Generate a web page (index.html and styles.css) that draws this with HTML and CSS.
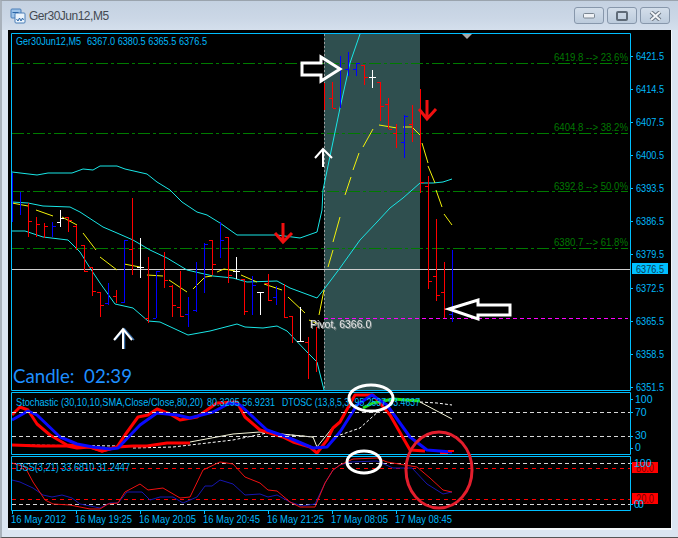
FILE: index.html
```html
<!DOCTYPE html>
<html lang="en">
<head>
  <meta charset="UTF-8">
  <title>Ger30Jun12,M5</title>
  <link rel="stylesheet" href="styles.css">
</head>
<body>

  <div class="window">
    <div class="titlebar">
      <svg class="app-icon" width="16" height="16" viewBox="0 0 16 16">
        <rect class="icon-back" x="1" y="1" width="10" height="9" rx="1"/>
        <rect class="icon-front" x="5" y="5" width="10" height="10" rx="1"/>
        <path class="icon-wave" d="M6.5 11l1.5 2 1.5-3 1.5 3 1.5-3 1 2"/>
        <path class="icon-wave" d="M2.5 4.5h6"/>
      </svg>
      <span class="title">Ger30Jun12,M5</span>
      <div class="win-buttons">
        <div class="win-btn">
          <svg width="12" height="6" viewBox="0 0 12 6"><rect class="glyph" x="0.5" y="0.5" width="11" height="4.5" rx="1"/></svg>
        </div>
        <div class="win-btn">
          <svg width="12" height="10" viewBox="0 0 12 10"><rect class="glyph-hollow" x="1" y="1" width="10" height="8" rx="1"/></svg>
        </div>
        <div class="win-btn">
          <svg width="13" height="10" viewBox="0 0 13 10"><path class="glyph-x" d="M2 1l9 8M11 1l-9 8"/><path class="glyph-x-in" d="M2 1l9 8M11 1l-9 8"/></svg>
        </div>
      </div>
    </div>

    <div class="client">
      <svg class="chart" width="663" height="498" viewBox="8 30 663 498">
        <!-- shaded session -->
        <rect class="session" x="324" y="34" width="96" height="356"/>
        <path class="vline" d="M324.5 34V390"/>
        <path class="chart-mark" d="M462 34h10l-5 5z"/>

        <!-- fibo levels -->
        <path class="fibo-line" d="M12 63.5H628M12 133.5H628M12 191.5H628M12 248.5H628"/>
        <path class="last-line" d="M12 269.5H630"/>
        <path class="pivot-line" d="M324 318.5H628"/>
        <text class="fibo" x="554" y="61" textLength="74" lengthAdjust="spacingAndGlyphs">6419.8 --&gt; 23.6%</text>
        <text class="fibo" x="554" y="131" textLength="74" lengthAdjust="spacingAndGlyphs">6404.8 --&gt; 38.2%</text>
        <text class="fibo" x="554" y="190" textLength="74" lengthAdjust="spacingAndGlyphs">6392.8 --&gt; 50.0%</text>
        <text class="fibo" x="554" y="246" textLength="74" lengthAdjust="spacingAndGlyphs">6380.7 --&gt; 61.8%</text>

        <!-- bollinger bands -->
        <polyline class="band" points="12,172 37,175 48,173 72,173 83,169 93,170 100,166 117,166 125,169 147,174 157,182 170,190 182,202 197,212 207,215 220,223 237,235 277,235 300,238 317,232 322,210 323,190 340,108 350,63 360,34"/>
        <polyline class="band" points="12,202 28,203 43,206 70,207 80,212 103,227 117,233 133,240 150,250 167,258 187,270 213,276 233,278 247,282 277,281 290,288 317,298 325,288 340,268 360,240 377,222 390,208 403,198 420,183 433,183 443,182 452,179"/>
        <polyline class="band" points="12,231 25,231 43,237 68,240 80,252 90,268 100,283 115,304 133,308 148,321 160,322 188,335 210,331 237,324 245,327 263,328 277,326 287,331 307,352 317,362 324,390"/>

        <!-- moving average -->
        <path class="ma" d="M12 203L28 206M36 210L53 216M62 217L77 225M83 233L96 250M100 257L117 270M124 264L140 267M147 275L163 276M169 280L187 292M193 289L205 277L212 276M217 272L224 269L235 271M241 275L257 282M264 284L282 290M288 297L305 313M309 320L318 324M319 315L324 290M328 267L333 250M333 242L340 217M345 195L351 177M353 170L359 153M363 147L373 129M379 125L397 128M403 127L412 127L420 135M422 143L428 163M428 166L435 183M436 190L442 207M444 214L452 225"/>

        <!-- bars -->
        <path class="bar-red" d="M28.5 203V237M29 221h3M36.5 217V237M37 224h3M44.5 223V238M45 226h3M68.5 217V232M69 220h3M65 217h3M76.5 225V250M73 226h3M84.5 245V272M81 245h3M85 271h3M92.5 267V296M89 267h3M93 291h3M100.5 292V317M97 292h3M101 305h3M116.5 290V303M113 296h3M132.5 198V275M129 249h3M148.5 257V323M145 318h3M164.5 252V288M165 280h3M172.5 285V317M169 286h3M173 305h3M180.5 271V317M181 316h3M177 307h3M212.5 240V275M209 240h3M213 264h3M228.5 237V283M225 237h3M229 275h3M244.5 279V315M245 311h3M241 279h3M268.5 274V301M265 283h3M269 300h3M284.5 284V318M285 317h3M292.5 316V343M289 316h3M308.5 337V379M305 342h3M316.5 327V372M324.5 83V110M332.5 82V108M333 108h3M329 98h3M364.5 65V85M361 65h3M365 77h3M380.5 82V121M377 82h3M381 106h3M388.5 98V129M385 104h3M389 129h3M396.5 124V148M393 133h3M412.5 105V142M409 124h3M420.5 89V193M421 182h3M428.5 176V289M425 186h3M429 281h3M436.5 219V301M433 276h3M437 295h3M444.5 262V318M441 292h3M445 309h3"/>
        <path class="bar-blue" d="M12.5 173V222M20.5 192V215M52.5 222V237M53 226h3M108.5 283V305M105 303h3M124.5 240V303M121 302h3M125 240h3M156.5 271V318M153 318h3M157 271h3M188.5 297V327M185 314h3M196.5 262V312M193 310h3M204.5 243V293M205 244h3M220.5 222V258M221 240h3M252.5 276V315M253 285h3M276.5 286V305M273 297h3M340.5 56V108M348.5 52V76M345 69h3M356.5 63V76M353 69h3M357 63h3M404.5 115V158M405 116h3M401 142h3M452.5 250V322M449 314h3"/>
        <path class="bar-white" d="M60.5 210V227M57 222h3M61 218h3M140.5 238V278M137 267h7M236.5 257V279M233 271h7M260.5 292V315M257 292h7M300.5 307V342M297 341h7M372.5 70V88M369 77h7"/>

        <text class="label" x="16" y="45" textLength="65" lengthAdjust="spacingAndGlyphs">Ger30Jun12,M5</text>
        <text class="label" x="87" y="45" textLength="120" lengthAdjust="spacingAndGlyphs">6367.0 6380.5 6365.5 6376.5</text>

        <!-- stochastic / dtosc -->
        <path class="line-dots" d="M12 445L120 446M133 448L173 447L233 440L267 433L313 437M340 435L360 428L380 410M420 402L437 403L452 405"/>
        <polyline class="line-cream" points="190,442 233,434 260,432 313,437 317,447 333,427 340,423"/>
        <polyline class="line-cream" points="420,402 452,419"/>
        <polyline class="stoch-red" points="12,445 40,446 67,446 77,448 90,447 102,451 117,447 133,446 147,446 167,443 190,443"/>
        <polyline class="stoch-red" points="12,415 20,407 28,410 37,424 50,435 67,445 90,447 102,451 117,447 125,435 138,417 148,415 157,409 170,414 180,420 197,417 217,403 237,402 245,417 260,430 283,437 293,442 310,447 317,453 327,440 333,428 340,422 355,395 373,395 390,415 410,450 425,451"/>
        <polyline class="stoch-red" points="440,453 448,453"/>
        <polyline class="stoch-green" points="363,408 373,403 393,399 420,401"/>
        <polyline class="stoch-blue" points="12,420 28,411 37,415 60,437 77,444 93,447 110,449 118,448 140,425 157,413 177,415 190,418 213,412 230,403 240,405 267,430 287,437 313,448 327,447 340,432 357,405 372,395 387,405 410,437 427,450 452,452"/>
        <path class="stoch-red-thin" d="M448 451h6"/>
        <path class="level" d="M12 412.5H630M12 436.5H630"/>
        <text class="label" x="16" y="406" textLength="187" lengthAdjust="spacingAndGlyphs">Stochastic (30,10,10,SMA,Close/Close,80,20)</text>
        <text class="label" x="207" y="406" textLength="68" lengthAdjust="spacingAndGlyphs">80.3295 56.9231</text>
        <text class="label" x="282" y="406" textLength="138" lengthAdjust="spacingAndGlyphs">DTOSC (13,8,5,3) 95.2537 93.4637</text>

        <!-- dss -->
        <path class="level" d="M12 463.5H630M12 504.5H630"/>
        <path class="level-red" d="M12 468.5H630M12 499.5H630"/>
        <polyline class="dss-blue" points="12,480 20,482 33,488 43,495 52,497 62,495 72,498 80,504 100,508 110,503 118,503 127,492 142,492 150,500 160,497 173,497 183,503 197,497 205,486 212,486 220,480 233,484 245,495 260,494 268,497 277,495 290,502 302,506 315,504 325,483 333,470 340,465 350,462 377,461 393,468 412,468 427,484 443,494 452,492"/>
        <polyline class="dss-red" points="12,463 25,467 33,482 45,500 53,504 70,505 90,509 100,509 108,504 118,503 125,492 140,484 148,490 163,488 180,498 190,497 203,470 220,462 233,464 245,477 260,483 268,490 277,491 290,502 300,507 315,507 325,483 333,470 340,465 353,459 377,458 387,462 417,467 430,478 443,490 452,492"/>
        <text class="label" x="16" y="471" textLength="114" lengthAdjust="spacingAndGlyphs">DSS(3,21) 33.6810 31.2447</text>

        <!-- pane frames -->
        <path class="frame" d="M11.5 33.5H630.5V390.5H11.5ZM11.5 392.5H630.5V454.5H11.5ZM11.5 456.5H630.5V510.5H11.5Z"/>
        <path class="frame" d="M630 56.5h3M630 89.5h3M630 122.5h3M630 155.5h3M630 188.5h3M630 221.5h3M630 254.5h3M630 288.5h3M630 321.5h3M630 354.5h3M630 387.5h3M630 399.5h3M630 412.5h3M630 436.5h3M630 448.5h3M630 463.5h3M630 504.5h3M12.5 511v3M76.5 511v3M140.5 511v3M204.5 511v3M268.5 511v3M332.5 511v3M396.5 511v3"/>

        <!-- price axis -->
        <g class="axis">
          <text x="636" y="60" textLength="28" lengthAdjust="spacingAndGlyphs">6421.5</text>
          <text x="636" y="93" textLength="28" lengthAdjust="spacingAndGlyphs">6414.5</text>
          <text x="636" y="126" textLength="28" lengthAdjust="spacingAndGlyphs">6407.5</text>
          <text x="636" y="159" textLength="28" lengthAdjust="spacingAndGlyphs">6400.5</text>
          <text x="636" y="192" textLength="28" lengthAdjust="spacingAndGlyphs">6393.5</text>
          <text x="636" y="225" textLength="28" lengthAdjust="spacingAndGlyphs">6386.5</text>
          <text x="636" y="258" textLength="28" lengthAdjust="spacingAndGlyphs">6379.5</text>
          <text x="636" y="292" textLength="28" lengthAdjust="spacingAndGlyphs">6372.5</text>
          <text x="636" y="325" textLength="28" lengthAdjust="spacingAndGlyphs">6365.5</text>
          <text x="636" y="358" textLength="28" lengthAdjust="spacingAndGlyphs">6358.5</text>
          <text x="636" y="391" textLength="28" lengthAdjust="spacingAndGlyphs">6351.5</text>
          <text x="635" y="403">100</text>
          <text x="635" y="416">70</text>
          <text x="635" y="439">30</text>
          <text x="635" y="451">0</text>
        </g>
        <rect class="badge" x="632" y="263" width="36" height="11"/>
        <text class="badge-text" x="636" y="273" textLength="28" lengthAdjust="spacingAndGlyphs">6376.5</text>
        <rect class="tag" x="632" y="462" width="26" height="11"/>
        <rect class="tag" x="632" y="493" width="26" height="11"/>
        <text class="tag-text" x="636" y="472" textLength="18" lengthAdjust="spacingAndGlyphs">80.0</text>
        <text class="tag-text" x="636" y="503" textLength="18" lengthAdjust="spacingAndGlyphs">20.0</text>
        <g class="axis">
          <text x="634" y="467">100</text>
          <text x="634" y="508">0</text>
          <text x="638" y="508">0</text>
        </g>

        <!-- time axis -->
        <g class="axis">
          <text x="11" y="523" textLength="55" lengthAdjust="spacingAndGlyphs">16 May 2012</text>
          <text x="75" y="523" textLength="57" lengthAdjust="spacingAndGlyphs">16 May 19:25</text>
          <text x="139" y="523" textLength="57" lengthAdjust="spacingAndGlyphs">16 May 20:05</text>
          <text x="203" y="523" textLength="57" lengthAdjust="spacingAndGlyphs">16 May 20:45</text>
          <text x="267" y="523" textLength="57" lengthAdjust="spacingAndGlyphs">16 May 21:25</text>
          <text x="331" y="523" textLength="57" lengthAdjust="spacingAndGlyphs">17 May 08:05</text>
          <text x="395" y="523" textLength="57" lengthAdjust="spacingAndGlyphs">17 May 08:45</text>
        </g>

        <text class="pivot" x="310" y="328">Pivot, 6366.0</text>
        <text class="candle" x="13" y="383" textLength="119" lengthAdjust="spacingAndGlyphs">Candle:&#160;&#160;02:39</text>

        <!-- hand drawn marks -->
        <path class="mark-shadow" d="M124.5 349V329M115 340L124.5 329L134 340"/>
        <path class="mark-thin" d="M123 349V329M114 340L123 329L132 340"/>
        <path class="mark-thin" d="M323 167V149M315 158L323 149L332 158"/>
        <path class="mark-red" d="M283 223V242M275 233L283 242L292 233"/>
        <path class="mark-red" d="M427 100V119M419 109L427 119L436 109"/>
        <path class="block-arrow" d="M302 63H321V57L340 69L321 81V75H302Z"/>
        <path class="block-arrow" d="M449 309L478 300V305H510V315H478V319Z"/>
        <ellipse class="ring-white" cx="371" cy="398" rx="22" ry="13"/>
        <ellipse class="ring-white" cx="364" cy="462" rx="17" ry="11"/>
        <ellipse class="ring-red" cx="439" cy="470" rx="33" ry="38"/>
      </svg>
    </div>
  </div>

</body>
</html>
```

FILE: styles.css
```css
body {
  margin: 0;
  background: #dbe5f1;
}
.window {
  width: 678px;
  height: 538px;
  box-sizing: border-box;
  display: flex;
  flex-direction: column;
  border-top: 1px solid #9aa3ad;
  border-left: 2px solid #a9b2bc;
  border-bottom: 1px solid #555;
  background: #dbe5f1;
  overflow: hidden;
}
.titlebar {
  height: 29px;
  flex-shrink: 0;
  display: flex;
  align-items: center;
  padding: 0 8px 0 8px;
  background: linear-gradient(#c4d1e1, #cbd7e6 60%, #d4dfec);
}
.app-icon {
  margin: 0 3px 0 0;
  flex-shrink: 0;
}
.icon-back {
  fill: #9cc2e8;
  stroke: #4a7fb8;
}
.icon-front {
  fill: #eaf3fc;
  stroke: #4a7fb8;
}
.icon-wave {
  fill: none;
  stroke: #2b66a8;
  stroke-width: 1;
}
.title {
  font: 12px "Liberation Sans", sans-serif;
  letter-spacing: -0.5px;
  color: #444a52;
}
.win-buttons {
  margin-left: auto;
  display: flex;
  gap: 3px;
}
.win-btn {
  width: 30px;
  height: 17px;
  box-sizing: border-box;
  display: flex;
  align-items: center;
  justify-content: center;
  border: 1px solid #8797ab;
  border-radius: 3px;
  background: linear-gradient(#d3deea, #bccbdc);
}
.glyph {
  fill: #eef1f5;
  stroke: #7b8692;
}
.glyph-hollow {
  fill: none;
  stroke: #5f6b78;
  stroke-width: 2;
}
.glyph-x {
  fill: none;
  stroke: #6b7682;
  stroke-width: 4;
}
.glyph-x-in {
  fill: none;
  stroke: #f2f4f7;
  stroke-width: 2;
}
.client {
  margin: 0 5px 0 6px;
  height: 498px;
  border-right: 1px solid #f4f7fa;
  border-bottom: 2px solid #f4f7fa;
  align-self: flex-start;
  display: flex;
}
.chart {
  background: #000;
  display: block;
}
.chart text {
  font-family: "Liberation Sans", sans-serif;
  font-size: 10.5px;
}
.session {
  fill: #2f4f4f;
}
.vline {
  stroke: #9a9a9a;
  stroke-dasharray: 2 2;
}
.chart-mark {
  fill: #a8a8a8;
}
.fibo-line {
  stroke: #007a00;
  stroke-dasharray: 12 3 3 3;
}
.last-line {
  stroke: #cfcfcf;
}
.pivot-line {
  stroke: #ff00ff;
  stroke-dasharray: 4 3;
}
.chart .fibo {
  fill: #007800;
}
.band {
  fill: none;
  stroke: #19e6e6;
}
.ma {
  fill: none;
  stroke: #f2f20a;
}
.bar-red,
.bar-blue,
.bar-white {
  fill: none;
  stroke-width: 1;
  shape-rendering: crispEdges;
}
.bar-red {
  stroke: #ff0000;
}
.bar-blue {
  stroke: #0000ff;
}
.bar-white {
  stroke: #fff;
}
.level {
  stroke: #d8d8d8;
  stroke-dasharray: 4 3;
}
.level-red {
  stroke: #ff0000;
  stroke-dasharray: 4 4;
}
.line-dots {
  fill: none;
  stroke: #fff;
  stroke-dasharray: 3 2;
}
.line-cream {
  fill: none;
  stroke: #f4f4d8;
}
.stoch-red,
.stoch-blue,
.stoch-green {
  fill: none;
  stroke-width: 3;
  stroke-linejoin: round;
}
.stoch-red {
  stroke: #ff0000;
}
.stoch-blue {
  stroke: #0a0aff;
}
.stoch-green {
  stroke: #1fe01f;
}
.stoch-red-thin {
  stroke: #ff0000;
  stroke-width: 2;
}
.dss-red {
  fill: none;
  stroke: #f01010;
}
.dss-blue {
  fill: none;
  stroke: #1616b0;
}
.frame {
  fill: none;
  stroke: #00bfff;
}
.chart .label,
.chart .axis text {
  fill: #00b8fa;
}
.badge {
  fill: #00bfff;
}
.chart .badge-text {
  fill: #0a3a50;
}
.tag {
  fill: #ff0000;
}
.chart .tag-text {
  fill: #7a0000;
  font-size: 12px;
}
.chart .pivot {
  fill: #e6e6e6;
  filter: drop-shadow(1px 1px 0 #7f8a8a);
}
.chart .candle {
  fill: #1e8fff;
  font-family: Lato, sans-serif;
  font-size: 19px;
}
.mark-thin,
.mark-shadow {
  fill: none;
  stroke: #fff;
  stroke-width: 2;
}
.mark-shadow {
  stroke: #3a6ea8;
  stroke-width: 1.5;
}
.mark-red {
  fill: none;
  stroke: #f01010;
  stroke-width: 3;
}
.block-arrow {
  fill: none;
  stroke: #fff;
  stroke-width: 3;
}
.ring-white {
  fill: none;
  stroke: #fff;
  stroke-width: 3;
}
.ring-red {
  fill: none;
  stroke: #e31e2d;
  stroke-width: 3;
}
```
